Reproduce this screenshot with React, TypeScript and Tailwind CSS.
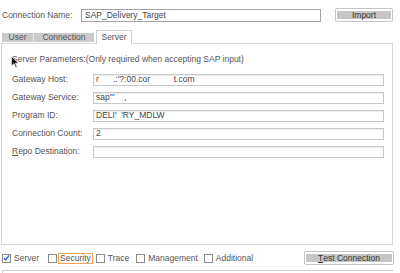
import React from "react"

const fields = [
  { label: "Gateway Host:", value: "r      .:'?:00.cor          t.com" },
  { label: "Gateway Service:", value: "sap'''    ," },
  { label: "Program ID:", value: "DELI'  'RY_MDLW" },
  { label: "Connection Count:", value: "2" },
  { label: "Repo Destination:", value: "", underline: true },
]

function Check({ checked }: { checked?: boolean }) {
  return (
    <span className="w-[9px] h-[9px] border border-[#8a8a8a] bg-white flex items-center justify-center shrink-0">
      {checked && (
        <svg width="8" height="8" viewBox="0 0 8 8">
          <path d="M1 4.2 L3 6.3 L7 1" fill="none" stroke="#2a5bd7" strokeWidth="1.5" />
        </svg>
      )}
    </span>
  )
}

function BandButton({ label, className }: { label: React.ReactNode; className: string }) {
  return (
    <div className={`h-[14px] border border-[#c4c4c4] rounded-[2px] bg-white flex items-center px-[1px] ${className}`}>
      <div className="w-full h-[8px] bg-[#c6c6c6] flex items-center justify-center text-[#333]">{label}</div>
    </div>
  )
}

export default function App() {
  return (
    <div className="w-[400px] h-[273px] bg-white overflow-hidden text-[8.5px] leading-none text-[#555] relative" style={{ fontFamily: '"Liberation Sans", Arial, sans-serif' }}>
      <div className="flex items-center pt-[8px] pl-[2px]">
        <span className="w-[79px]">Connection Name:</span>
        <div className="w-[240px] h-[13px] border border-[#a4a4a4] flex items-center pl-[3px] text-[#444]">SAP_Delivery_Target</div>
        <BandButton label="Import" className="ml-[14px] w-[58px]" />
      </div>

      <div className="flex items-end mt-[8px] pl-[2px] h-[14px] relative z-10">
        <div className="w-[32px] h-[9px] mb-[2px] bg-[#cacaca] flex items-center justify-center border-r border-[#e8e8e8]">User</div>
        <div className="w-[60px] h-[9px] mb-[2px] bg-[#cacaca] flex items-center justify-center">Connection</div>
        <div className="w-[36px] h-[14px] ml-[2px] bg-white border border-b-0 border-[#d0d0d0] flex items-center justify-center">Server</div>
      </div>

      <div className="ml-[1px] w-[392px] h-[202px] -mt-px border border-[#d6d6d6] relative">
        <div className="pl-[10px] pt-[11px]">Server Parameters:(Only required when accepting SAP input)</div>
        <svg className="absolute left-[9px] top-[12px]" width="8" height="12" viewBox="0 0 8 12">
          <path d="M0.5 0.5 L0.5 10 L3 7.6 L4.8 11.5 L6 11 L4.3 7.2 L7.5 7.2 Z" fill="#111" stroke="#fff" strokeWidth="0.6" />
        </svg>
        <div className="flex flex-col gap-[6px] mt-[10px] pl-[10px]">
          {fields.map((f) => (
            <div key={f.label} className="flex items-center">
              <span className="w-[81px]">
                {f.underline ? (
                  <>
                    <span className="underline">R</span>
                    {f.label.slice(1)}
                  </>
                ) : (
                  f.label
                )}
              </span>
              <div className="w-[291px] h-[12px] border border-[#c8c8c8] shadow-[inset_0_1px_1px_rgba(0,0,0,0.08)] flex items-center pl-[2px] text-[#444] whitespace-pre">{f.value}</div>
            </div>
          ))}
        </div>
      </div>

      <div className="flex items-center mt-[6px] pl-[2px] h-[14px]">
        <Check checked />
        <span className="ml-[3px]">Server</span>
        <span className="ml-[9px]"><Check /></span>
        <span className="ml-[1px] px-[1px] h-[11px] border border-[#f3a25a] flex items-center">Security</span>
        <span className="ml-[3px]"><Check /></span>
        <span className="ml-[3px]">Trace</span>
        <span className="ml-[7px]"><Check /></span>
        <span className="ml-[3px]">Management</span>
        <span className="ml-[6px]"><Check /></span>
        <span className="ml-[3px]">Additional</span>
        <BandButton
          label={
            <>
              <span className="underline">T</span>est Connection
            </>
          }
          className="ml-auto mr-[6px] w-[90px]"
        />
      </div>

      <div className="mt-[5px] ml-[2px] w-[391px] h-[4px] border-t border-l border-[#d0d0d0]" />
    </div>
  )
}
